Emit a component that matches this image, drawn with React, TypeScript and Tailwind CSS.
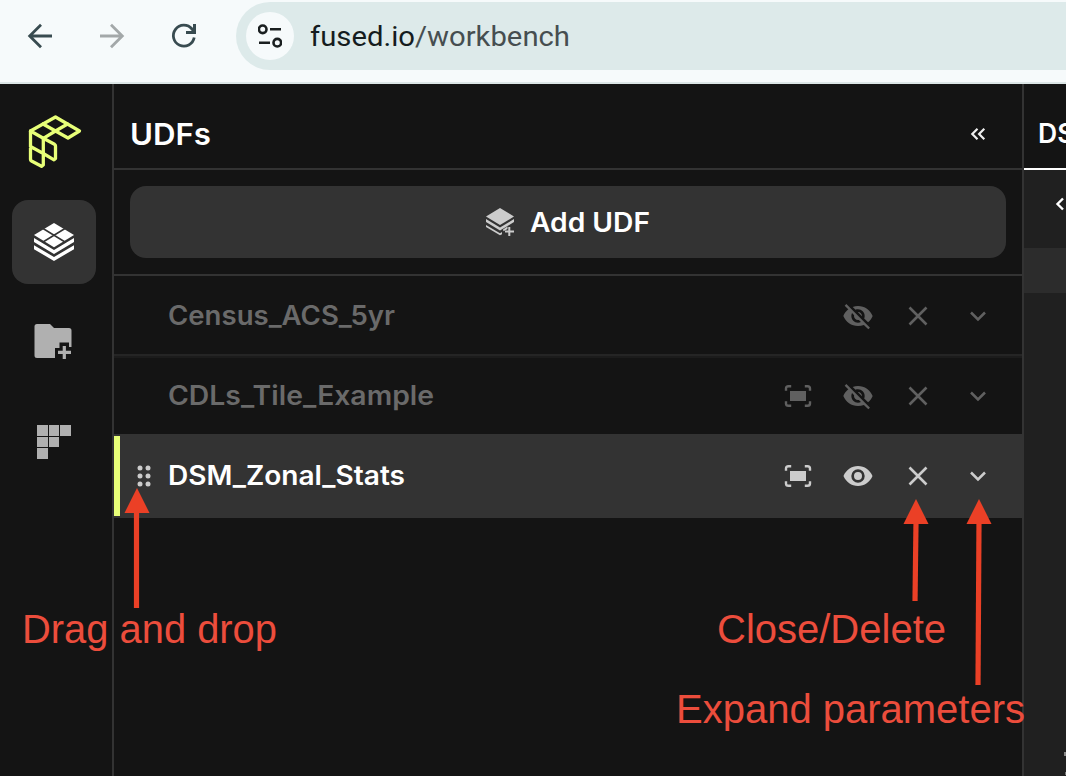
import type { ReactNode } from "react";

const ui = "font-['Inter',sans-serif]";

function Logo() {
  return (
    <svg className="h-[60px] w-[60px]" viewBox="24 111 60 60" fill="none" stroke="#e8ff78" strokeWidth="3.300" strokeLinejoin="round" strokeLinecap="round">
      <path d="M30.500 131 55.500 117 79.500 131 68 138 55.500 131 43.300 138.300Z" />
      <path d="M43 124 55.500 131 67.500 124" />
      <path d="M30.500 131V159.500Q30.500 160.500 31.500 161L41.500 166.300 43.300 165V138.300M30.500 146.500 43.300 153.500 54 159.800 55.500 158.500V146Q55.500 145 54.500 144.300L43.300 138.300" />
    </svg>
  );
}

function GridLayers() {
  return (
    <svg className="h-[42px] w-[42px]" viewBox="33 221 42 42" fill="#fff">
      <path d="M54 223 74 235 54 247.200 34 235Z" />
      <path d="M43 228.500 65 242M65 228.500 43 242" stroke="#333" strokeWidth="1.500" />
      <path d="M34 238 54 250 74 238V242L54 254 34 242ZM34 245.300 54 257 74 245.300V249.200L54 261 34 249.200Z" />
    </svg>
  );
}

function FolderAdd() {
  return (
    <svg className="h-[40px] w-[40px]" viewBox="33 322 40 40">
      <path d="M37 324H50L54 328H69Q71.500 328 71.500 330.500V347H69V342.500H59.500V348H55V358H37Q34.500 358 34.500 355.500V326.500Q34.500 324 37 324Z" fill="#b0b0b0" />
      <path d="M64.300 346V359M58 352.300H71" stroke="#b0b0b0" strokeWidth="3.200" />
    </svg>
  );
}

function Blocks() {
  return (
    <svg className="h-[34px] w-[34px]" viewBox="0 0 34 34" fill="#b0b0b0">
      <path d="M0 0h11v11H0zM12 0h10v11H12zM23 0h11v11H23zM0 12h11v10H0zM12 12h10v10H12zM0 23h11v11H0z" />
    </svg>
  );
}

function AddLayers() {
  return (
    <svg className="h-[30px] w-[30px]" viewBox="485 207 30 30" fill="#ccc">
      <path d="M500 208 514 216.500 500 225 486 216.500ZM486 219 500 227.500 514 219V222L500 230.500 486 222ZM486 225 500 233.200 502 232V234.200L500 235.200 486 227ZM503 229.500 507.500 226.500V229L503.500 231.200Z" />
      <path d="M509.300 227V236M505 231.500H514" stroke="#ccc" strokeWidth="2" />
    </svg>
  );
}

function Fit() {
  return (
    <svg className="h-6 w-7" viewBox="0 0 28 24" fill="currentColor">
      <path d="M6 7h16v10H6z" />
      <path d="M7.200 2.200H4.500Q2 2.200 2 4.500v2.200M20.800 2.200h2.700Q26 2.200 26 4.500v2.200M7.200 21.800H4.500Q2 21.800 2 19.500v-2.200M20.800 21.800h2.700Q26 21.800 26 19.500v-2.200" fill="none" stroke="currentColor" strokeWidth="2.400" />
    </svg>
  );
}

function Eye() {
  return (
    <svg className="h-[30px] w-[30px]" viewBox="0 0 30 30" fill="currentColor">
      <path fillRule="evenodd" d="M15 5C8.500 5 3 9 .5 15 3 21 8.500 25 15 25S27 21 29.500 15C27 9 21.500 5 15 5Zm0 16.700a6.700 6.700 0 1 1 0-13.400 6.700 6.700 0 0 1 0 13.400Zm0-2.700a4 4 0 1 0 0-8 4 4 0 0 0 0 8Z" />
    </svg>
  );
}

function EyeOff() {
  return (
    <svg className="h-8 w-8" viewBox="0 0 24 24" fill="currentColor">
      <path d="M12 7c2.760 0 5 2.240 5 5 0 .65-.13 1.260-.36 1.830l2.920 2.920c1.510-1.260 2.700-2.890 3.430-4.750-1.730-4.390-6-7.500-11-7.500-1.400 0-2.740.25-3.980.7l2.160 2.160C10.740 7.130 11.350 7 12 7zM2 4.270l2.280 2.280.46.46C3.080 8.300 1.780 10.020 1 12c1.730 4.390 6 7.500 11 7.500 1.550 0 3.030-.3 4.380-.84l.42.42L19.730 22 21 20.730 3.270 3 2 4.270zM7.530 9.800l1.550 1.550c-.05.21-.08.43-.08.65 0 1.660 1.340 3 3 3 .22 0 .44-.03.65-.08l1.550 1.550c-.67.33-1.410.53-2.200.53-2.760 0-5-2.240-5-5 0-.79.2-1.530.53-2.200zm4.310-.78 3.150 3.150.02-.16c0-1.660-1.340-3-3-3l-.17.01z" />
    </svg>
  );
}

function Cross() {
  return (
    <svg className="h-5 w-5" viewBox="0 0 20 20" stroke="currentColor" strokeWidth="2.600">
      <path d="m1.500 1.500 17 17M18.500 1.500l-17 17" />
    </svg>
  );
}

function Chevron() {
  return (
    <svg className="h-5 w-5" viewBox="0 0 20 20" fill="none" stroke="currentColor" strokeWidth="2.500">
      <path d="m3 6.500 7 7 7-7" />
    </svg>
  );
}

function Cell({ children }: { children?: ReactNode }) {
  return <div className="flex w-[60px] items-center justify-center">{children}</div>;
}

function Row({ name, width, fit, active }: { name: string; width: number; fit?: boolean; active?: boolean }) {
  return (
    <div className={active ? "flex h-[84px] items-center bg-[#333] text-[#ccc]" : "flex h-20 items-center text-[#606060]"}>
      <div className={active ? "h-20 w-[6px] bg-[#e8ff78]" : "h-20 w-[6px]"} />
      <div className="flex w-12 justify-center">
        {active && (
          <svg className="h-6 w-4" viewBox="0 0 16 24" fill="#ccc">
            {[4, 12, 20].map((y) => (
              <g key={y}><circle cx="4" cy={y} r="2.500" /><circle cx="12" cy={y} r="2.500" /></g>
            ))}
          </svg>
        )}
      </div>
      <svg className={`${ui} h-10 flex-1 text-[26.5px] font-semibold`}>
        <text x="0" y="29" textLength={width} lengthAdjust="spacingAndGlyphs" fill={active ? "#fff" : "#6a6a6a"}>{name}</text>
      </svg>
      <Cell>{fit && <Fit />}</Cell>
      <Cell>{active ? <Eye /> : <EyeOff />}</Cell>
      <Cell><Cross /></Cell>
      <Cell><Chevron /></Cell>
      <div className="w-[14px]" />
    </div>
  );
}

function BrowserBar() {
  return (
    <header className="flex h-[84px] border-b-2 border-[#dce6e6] bg-[#f6fafb]">
      <svg className="h-[72px] w-[236px]" viewBox="0 0 236 72" fill="none" strokeWidth="2.800">
        <path d="M52 36H30M41 24.700 29.700 36 41 47.300" stroke="#384b50" />
        <path d="M100 36h22M111 24.700 122.300 36 111 47.300" stroke="#a3a8a9" />
        <path d="M194.200 37.500a10.500 10.500 0 1 1-2.200-8.500l2.500 3" stroke="#384b50" />
        <path d="M194.500 24v8.500H186" stroke="#384b50" strokeWidth="3" />
      </svg>
      <div className="mt-[2px] flex h-[68px] flex-1 items-center rounded-l-full bg-[#ddeaea] pl-[10px]">
        <div className="flex h-12 w-12 items-center justify-center rounded-full bg-[#f6fafb]">
          <svg className="h-6 w-6" viewBox="0 0 24 24" fill="none" stroke="#1a1f20" strokeWidth="2.600">
            <circle cx="4.700" cy="5.300" r="3.800" /><circle cx="19.300" cy="18.700" r="3.800" />
            <path d="M12 5.300h11M1 18.700h11" />
          </svg>
        </div>
        <svg className="ml-4 h-10 w-[300px] font-['Roboto',sans-serif] text-[28.5px]">
          <text x="0" y="30" textLength="260" lengthAdjust="spacingAndGlyphs" fill="#464e50"><tspan fill="#151c1e">fused.io</tspan>/workbench</text>
        </svg>
      </div>
    </header>
  );
}

function Arrow({ className, x, height, lean }: { className: string; x: number; height: number; lean: number }) {
  return (
    <svg className={className} viewBox={`0 0 26 ${height}`}>
      <path d="M13 0 25.500 25H.5Z" fill="#eb4026" />
      <path d={`M${x} 23 ${x - lean} ${height}`} stroke="#eb4026" strokeWidth="5.200" />
    </svg>
  );
}

function Annotations() {
  return (
    <div className="pointer-events-none absolute inset-0 font-['Liberation_Sans',sans-serif] text-[40px]">
      <Arrow className="absolute left-[124px] top-[488px] h-[120px] w-[26px]" x={12.500} height={120} lean={0} />
      <Arrow className="absolute left-[903px] top-[499px] h-[102px] w-[26px]" x={13} height={102} lean={1} />
      <Arrow className="absolute left-[966px] top-[499px] h-[186px] w-[26px]" x={13} height={186} lean={1} />
      <svg className="absolute inset-0 h-full w-full" fill="#ec4d3c">
        <text x="22" y="643" textLength="255" lengthAdjust="spacingAndGlyphs">Drag and drop</text>
        <text x="717" y="643" textLength="229" lengthAdjust="spacingAndGlyphs">Close/Delete</text>
        <text x="676" y="723" textLength="349" lengthAdjust="spacingAndGlyphs">Expand parameters</text>
      </svg>
    </div>
  );
}

export default function App() {
  return (
    <div className="relative flex h-[776px] w-[1066px] flex-col overflow-hidden bg-[#141414]">
      <BrowserBar />
      <main className="flex min-h-0 flex-1">
        <nav className="flex w-[114px] flex-col border-r-2 border-[#333] pl-3">
          <div className="ml-3 mt-[27px] h-[60px]"><Logo /></div>
          <div className="mt-[29px] flex h-[84px] w-[84px] items-center justify-center rounded-2xl bg-[#333]"><GridLayers /></div>
          <div className="ml-[21px] mt-[38px] h-10"><FolderAdd /></div>
          <div className="ml-[25px] mt-[63px]"><Blocks /></div>
        </nav>
        <section className="w-[910px] border-r-2 border-[#333]">
          <div className="flex h-[86px] items-center justify-between border-b-2 border-[#333] pl-4 pr-[36px] pt-4">
            <svg className={`${ui} h-10 w-[100px] text-[30px] font-semibold`} fill="#fff"><text x="0" y="31" textLength="81" lengthAdjust="spacingAndGlyphs">UDFs</text></svg>
            <svg className="h-4 w-4" viewBox="0 0 16 16" fill="none" stroke="#eee" strokeWidth="2.200"><path d="M7.500 2.800 2.300 8l5.200 5.200M14.300 2.800 9.100 8l5.200 5.200" /></svg>
          </div>
          <div className="h-[106px] border-b-2 border-[#333] p-4">
            <button className="flex h-[72px] w-full items-center justify-center gap-[15px] rounded-2xl bg-[#333]">
              <AddLayers />
              <svg className={`${ui} h-10 w-[121px] text-[27px] font-semibold`} fill="#fff"><text x="0" y="30" textLength="120" lengthAdjust="spacingAndGlyphs">Add UDF</text></svg>
            </button>
          </div>
          <Row name="Census_ACS_5yr" width={227} />
          <div className="-mt-[2px] h-1 border-t-2 border-[#252525] bg-[#1c1c1c]" />
          <div className="-mt-[2px]"><Row name="CDLs_Tile_Example" width={266} fit /></div>
          <div className="-mt-[2px]"><Row name="DSM_Zonal_Stats" width={237} fit active /></div>
        </section>
        <aside className="flex flex-1 flex-col overflow-hidden bg-[#202020]">
          <div className="h-[86px] shrink-0 border-b-2 border-white bg-[#141414] pl-[14px] pt-[31px]">
            <svg className={`${ui} h-10 w-[60px] text-[26.5px] font-semibold`} fill="#fff"><text x="0" y="28">DS</text></svg>
          </div>
          <div className="flex h-[78px] shrink-0 pl-[31px] pt-[26px]">
            <svg className="h-4 w-4 shrink-0" viewBox="0 0 16 16" fill="none" stroke="#fff" strokeWidth="2.400"><path d="m8 2.500-5.500 5.500 5.500 5.500" /></svg>
          </div>
          <div className="h-[45px] shrink-0 bg-[#2c2c2c]" />
          <div className="mt-auto flex h-6 flex-col items-end justify-between pb-px">
            <div className="h-1 w-[2px] bg-[#888]" />
            <div className="h-[3px] w-px bg-[#777]" />
          </div>
        </aside>
      </main>
      <Annotations />
    </div>
  );
}
